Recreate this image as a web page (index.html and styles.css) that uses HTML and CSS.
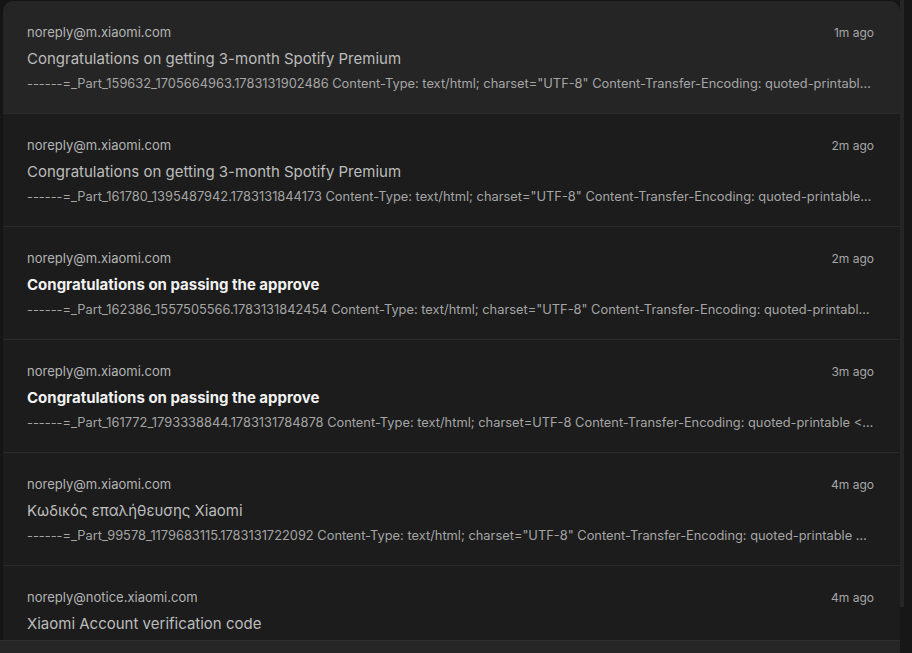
FILE: index.html
```html
<!DOCTYPE html>
<html lang="en">
<head>
    <meta charset="UTF-8">
    <meta name="viewport" content="width=device-width, initial-scale=1.0">
    <title>Inbox</title>
    <link rel="stylesheet" href="styles.css">
</head>
<body>
    <div class="app">
        <div class="inbox">
            <ul class="mail-list">
                <li class="mail selected">
                    <div class="mail-head">
                        <span class="sender">noreply@m.xiaomi.com</span>
                        <span class="time">1m ago</span>
                    </div>
                    <div class="subject">Congratulations on getting 3-month Spotify Premium</div>
                    <div class="preview">------=_Part_159632_1705664963.1783131902486 Content-Type: text/html; charset="UTF-8" Content-Transfer-Encoding: quoted-printable &lt;!DOCTYPE html&gt;</div>
                </li>
                <li class="mail">
                    <div class="mail-head">
                        <span class="sender">noreply@m.xiaomi.com</span>
                        <span class="time">2m ago</span>
                    </div>
                    <div class="subject">Congratulations on getting 3-month Spotify Premium</div>
                    <div class="preview">------=_Part_161780_1395487942.1783131844173 Content-Type: text/html; charset="UTF-8" Content-Transfer-Encoding: quoted-printable &lt;!DOCTYPE html&gt;</div>
                </li>
                <li class="mail unread">
                    <div class="mail-head">
                        <span class="sender">noreply@m.xiaomi.com</span>
                        <span class="time">2m ago</span>
                    </div>
                    <div class="subject">Congratulations on passing the approve</div>
                    <div class="preview">------=_Part_162386_1557505566.1783131842454 Content-Type: text/html; charset="UTF-8" Content-Transfer-Encoding: quoted-printable &lt;!DOCTYPE html&gt;</div>
                </li>
                <li class="mail unread">
                    <div class="mail-head">
                        <span class="sender">noreply@m.xiaomi.com</span>
                        <span class="time">3m ago</span>
                    </div>
                    <div class="subject">Congratulations on passing the approve</div>
                    <div class="preview">------=_Part_161772_1793338844.1783131784878 Content-Type: text/html; charset=UTF-8 Content-Transfer-Encoding: quoted-printable &lt;!DOCTYPE html&gt;</div>
                </li>
                <li class="mail">
                    <div class="mail-head">
                        <span class="sender">noreply@m.xiaomi.com</span>
                        <span class="time">4m ago</span>
                    </div>
                    <div class="subject">Κωδικός επαλήθευσης Xiaomi</div>
                    <div class="preview">------=_Part_99578_1179683115.1783131722092 Content-Type: text/html; charset="UTF-8" Content-Transfer-Encoding: quoted-printable &lt;!DOCTYPE html&gt;</div>
                </li>
                <li class="mail">
                    <div class="mail-head">
                        <span class="sender">noreply@notice.xiaomi.com</span>
                        <span class="time">4m ago</span>
                    </div>
                    <div class="subject">Xiaomi Account verification code</div>
                    <div class="preview">------=_Part_99012_1179683001.1783131720115 Content-Type: text/html; charset="UTF-8" Content-Transfer-Encoding: quoted-printable &lt;!DOCTYPE html&gt;</div>
                </li>
            </ul>
            <div class="list-footer"></div>
        </div>
        <div class="scroll-rail">
            <div class="scroll-thumb"></div>
        </div>
    </div>
</body>
</html>
```

FILE: styles.css
```css
html, body {
    margin: 0;
    height: 100%;
    background-color: #151515;
    font-family: Inter, "Noto Sans", sans-serif;
    overflow: hidden;
}
.app {
    display: flex;
    height: 100vh;
}
.inbox {
    flex: 1;
    position: relative;
    overflow: hidden;
}
.scroll-rail {
    width: 12px;
    background-color: #171717;
}
.scroll-thumb {
    height: 607px;
    width: 4px;
    background-color: #262626;
}
.mail-list {
    list-style: none;
    margin: 1px 0 0 3px;
    padding: 0;
    background-color: #1c1c1c;
    border-radius: 10px 10px 0 0;
}
.mail {
    padding: 20px 26px 19px 24px;
    border-bottom: 1px solid #2a2a2a;
}
.mail.selected {
    background-color: #252525;
    border-radius: 10px 10px 0 0;
}
.mail-head {
    display: flex;
    justify-content: space-between;
    align-items: center;
    height: 22px;
}
.sender {
    font-size: 13px;
    color: #b4b4b4;
}
.time {
    font-size: 12px;
    color: #a6a6a6;
}
.subject {
    margin-top: 5px;
    line-height: 22px;
    font-size: 15px;
    color: #bcbcbc;
}
.unread .subject {
    color: #f2f2f2;
    font-weight: 700;
}
.preview {
    margin-top: 4px;
    line-height: 20px;
    font-size: 12.85px;
    color: #a5a5a5;
    white-space: nowrap;
    overflow: hidden;
    text-overflow: ellipsis;
}
.list-footer {
    position: absolute;
    left: 0;
    right: 0;
    bottom: 0;
    height: 12px;
    background-color: #262626;
    border-top: 1px solid #2e2e2e;
}
```
